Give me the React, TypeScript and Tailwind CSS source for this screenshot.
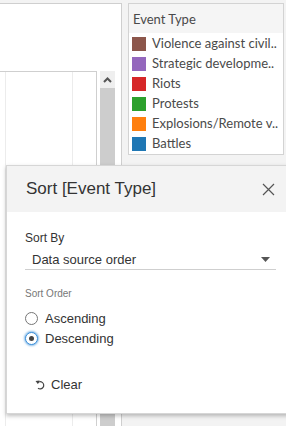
import React from "react";

const items = [
  { color: "#8c564b", label: "Violence against civil.." },
  { color: "#9467bd", label: "Strategic developme.." },
  { color: "#d62728", label: "Riots" },
  { color: "#2ca02c", label: "Protests" },
  { color: "#ff7f0e", label: "Explosions/Remote v.." },
  { color: "#1f77b4", label: "Battles" },
];

export default function App() {
  return (
    <div className="relative w-[286px] h-[426px] overflow-hidden bg-[#f3f3f3]">
      <div className="flex pt-[3px] h-full">
        {/* worksheet area */}
        <div className="w-[122px] h-full bg-white border-t border-r border-[#cfcfcf] flex flex-col">
          <div className="h-[67px]" />
          <div className="flex flex-1">
            <div className="w-[97px] border-t border-r border-[#cfcfcf] flex">
              <div className="w-[5px]" />
              <div className="w-[67px] border-l border-[#ececec]" />
              <div className="flex-1 border-l border-[#ececec]" />
            </div>
            <div className="ml-[3px] w-[15px] flex flex-col">
              <div className="h-[17px] bg-[#efefef] flex items-center justify-center">
                <svg width="9" height="6" viewBox="0 0 9 6">
                  <path d="M1 5 L4.5 1.5 L8 5" fill="none" stroke="#555" strokeWidth="2" />
                </svg>
              </div>
              <div className="flex-1 bg-[#cdcdcd]" />
            </div>
          </div>
        </div>
        {/* legend */}
        <div className="ml-[6px] w-[156px] h-[152px] border border-[#d3d3d3] bg-white flex flex-col" style={{ fontFamily: "Lato, 'Open Sans', sans-serif" }}>
          <div className="h-[29px] bg-[#f5f5f5] flex items-center pl-[4px] pt-[2px] text-[13px] text-[#4a4a4a]">Event Type</div>
          <div className="flex flex-col pl-[3px] pt-[1px]">
            {items.map((it) => (
              <div key={it.label} className="h-[20px] flex items-center">
                <div className="w-[14px] h-[14px]" style={{ backgroundColor: it.color }} />
                <span className="ml-[6px] text-[13px] text-[#4a4a4a] whitespace-nowrap">{it.label}</span>
              </div>
            ))}
          </div>
        </div>
      </div>

      {/* Sort dialog */}
      <div
        className="absolute left-[6px] top-[165px] w-[284px] h-[249px] bg-white border border-[#d6d6d6] shadow-[0_2px_4px_rgba(0,0,0,0.25)] flex flex-col text-[#333]"
        style={{ fontFamily: "'Liberation Sans', Arial, sans-serif" }}
      >
        <div className="h-[46px] bg-[#f3f3f3] flex items-center pl-[19px] pr-[12px]">
          <span className="text-[17px] text-[#333] flex-1">Sort [Event Type]</span>
          <svg width="13" height="13" viewBox="0 0 13 13" className="mr-[2px]">
            <path d="M1 1 L12 12 M12 1 L1 12" stroke="#555" strokeWidth="1.2" />
          </svg>
        </div>
        <div className="flex flex-col pl-[18px] pr-[9px]">
          <div className="mt-[19px] text-[12px] leading-[14px]">Sort By</div>
          <div className="mt-[5px] h-[20px] flex items-center border-b border-[#cfcfcf] w-[251px]">
            <span className="ml-[7px] text-[13px] flex-1">Data source order</span>
            <svg width="9" height="5" viewBox="0 0 9 5" className="mr-[6px]">
              <path d="M0 0 L9 0 L4.5 5 Z" fill="#555" />
            </svg>
          </div>
          <div className="mt-[18px] text-[10px] leading-[12px] text-[#777]">Sort Order</div>
          <div className="mt-[12px] flex flex-col gap-[7px]">
            <label className="flex items-center h-[13px]">
              <span className="w-[13px] h-[13px] rounded-full border border-[#767676] bg-white" />
              <span className="ml-[7px] text-[13px]">Ascending</span>
            </label>
            <label className="flex items-center h-[13px]">
              <span className="w-[13px] h-[13px] rounded-full border border-[#3b8fd9] bg-white flex items-center justify-center shadow-[0_0_2px_1px_rgba(59,143,217,0.6)]">
                <span className="w-[5px] h-[5px] rounded-full bg-[#444]" />
              </span>
              <span className="ml-[7px] text-[13px]">Descending</span>
            </label>
          </div>
          <div className="mt-[30px] ml-[10px] flex items-center">
            <svg width="10" height="11" viewBox="0 0 10 11">
              <path d="M2.2 4.2 A3.6 3.6 0 1 1 3 9.2" fill="none" stroke="#444" strokeWidth="1.2" />
              <path d="M0.5 2 L3 5 L4.6 1.6 Z" fill="#444" />
            </svg>
            <span className="ml-[6px] text-[13px]">Clear</span>
          </div>
        </div>
      </div>
    </div>
  );
}
